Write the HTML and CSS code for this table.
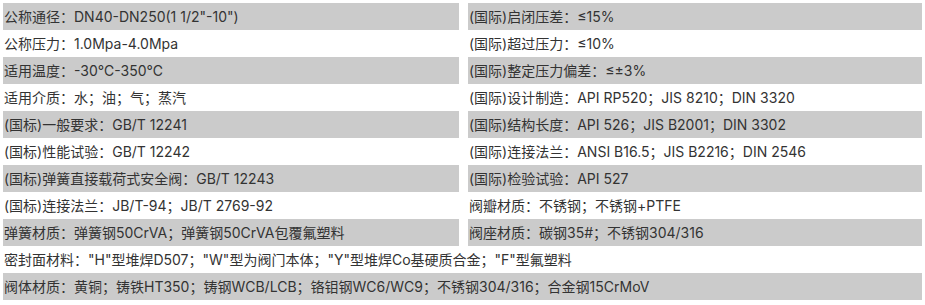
FILE: index.html
```html
<!DOCTYPE html>
<html lang="zh-CN">

<head>
    <meta charset="UTF-8">
    <meta name="viewport" content="width=device-width, initial-scale=1.0">
    <title>安全阀参数</title>
    <link rel="stylesheet" href="styles.css">
</head>

<body>

    <ul class="params">
        <li class="row-dark">公称通径：DN40-DN250(1 1/2"-10")</li>
        <li class="row-dark">(国际)启闭压差：≤15%</li>

        <li>公称压力：1.0Mpa-4.0Mpa</li>
        <li>(国际)超过压力：≤10%</li>

        <li class="row-dark">适用温度：-30℃-350℃</li>
        <li class="row-dark">(国际)整定压力偏差：≤±3%</li>

        <li>适用介质：水；油；气；蒸汽</li>
        <li>(国际)设计制造：API RP520；JIS 8210；DIN 3320</li>

        <li class="row-dark">(国标)一般要求：GB/T 12241</li>
        <li class="row-dark">(国际)结构长度：API 526；JIS B2001；DIN 3302</li>

        <li>(国标)性能试验：GB/T 12242</li>
        <li>(国际)连接法兰：ANSI B16.5；JIS B2216；DIN 2546</li>

        <li class="row-dark">(国标)弹簧直接载荷式安全阀：GB/T 12243</li>
        <li class="row-dark">(国际)检验试验：API 527</li>

        <li>(国标)连接法兰：JB/T-94；JB/T 2769-92</li>
        <li>阀瓣材质：不锈钢；不锈钢+PTFE</li>

        <li class="row-dark">弹簧材质：弹簧钢50CrVA；弹簧钢50CrVA包覆氟塑料</li>
        <li class="row-dark">阀座材质：碳钢35#；不锈钢304/316</li>

        <li class="full">密封面材料："H"型堆焊D507；"W"型为阀门本体；"Y"型堆焊Co基硬质合金；"F"型氟塑料</li>

        <li class="full row-dark">阀体材质：黄铜；铸铁HT350；铸钢WCB/LCB；铬钼钢WC6/WC9；不锈钢304/316；合金钢15CrMoV</li>
    </ul>

</body>

</html>
```

FILE: styles.css
```css
body {
    margin: 0;
    padding: 0;
    background-color: #fff;
    color: #333;
    font-family: 'Inter', 'Noto Sans CJK SC', sans-serif;
    font-size: 14px;
}

.params {
    list-style: none;
    margin: 0;
    padding: 3px 0 0 3px;
    display: grid;
    grid-template-columns: 456px 454px;
    column-gap: 9px;
}

.params li {
    height: 27px;
    line-height: 27px;
    padding-left: 1px;
    white-space: nowrap;
    overflow: hidden;
}

.params li.row-dark {
    background-color: #cbcbcb;
}

.params li.full {
    grid-column: 1 / 3;
}
```
